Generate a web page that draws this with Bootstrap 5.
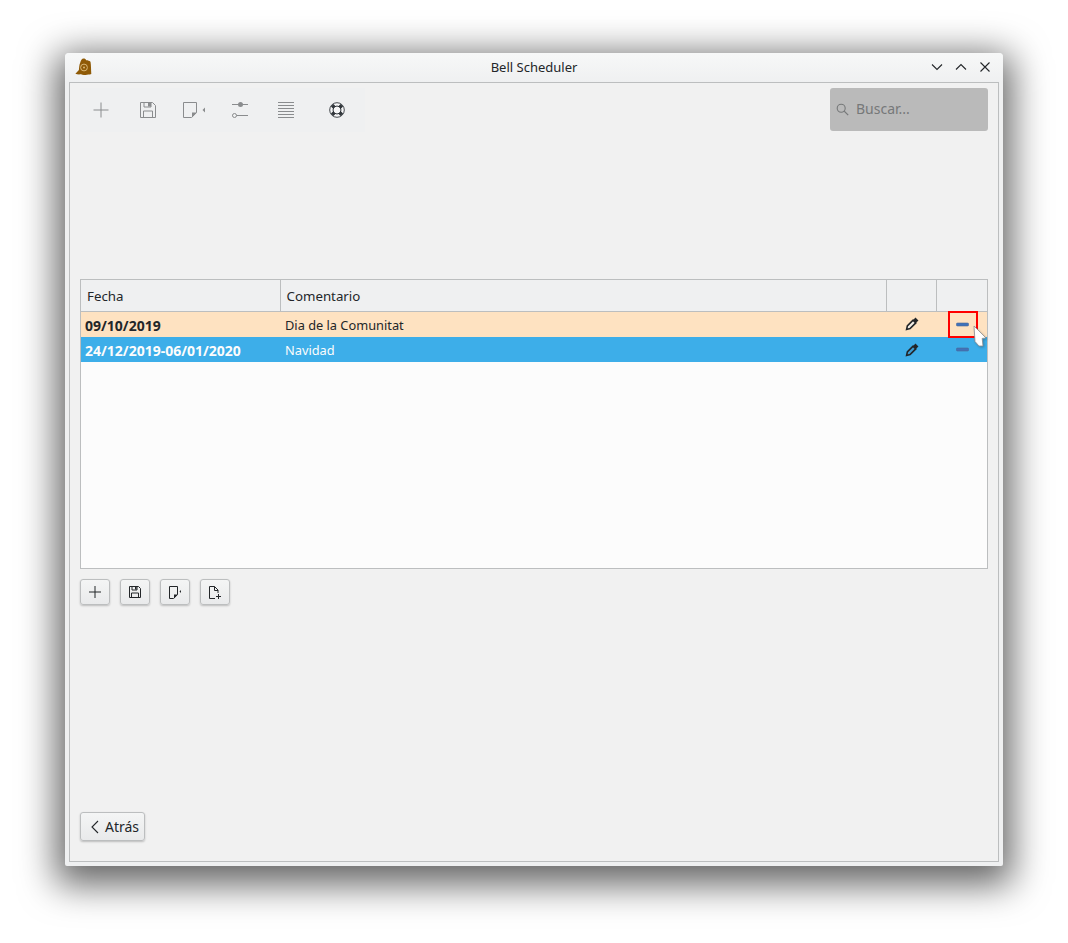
<!DOCTYPE html>
<html lang="es">
<head>
<meta charset="utf-8">
<title>Bell Scheduler</title>
<link href="https://cdn.jsdelivr.net/npm/bootstrap@5.3.0/dist/css/bootstrap.min.css" rel="stylesheet">
<style>
html,body{height:943px;overflow:hidden;background:#fff;font-family:"Noto Sans",sans-serif;font-size:13px;color:#232629}
.app-stage{padding:53px 65px 0;height:943px}
.app-win{position:relative;width:938px;height:813px;background:#eff0f1;border-radius:4px 4px 2px 2px;box-shadow:0 10px 36px 9px rgba(0,0,0,.6);display:flex;flex-direction:column}
.app-title{height:29px;flex:none;padding:0 12px 0 9px;background:linear-gradient(#f7f8f8,#eff0f1);border-radius:4px 4px 0 0;position:relative}
.app-title-text{position:absolute;left:0;right:0;top:5px;text-align:center;line-height:18px;font-size:13px}
.app-winbtns{position:absolute;right:12px;top:8px;gap:12px}
.app-winbtns svg{display:block}
.app-body{flex:1;margin:0 4px 4px;border:1px solid #bcbebf;background:#f1f1f1;padding:5px 10px 20px 10px;display:flex;flex-direction:column}
.app-top{height:44px;flex:none}
.app-toolbar{width:285px;height:44px;background:#eff0f1;position:relative}
.app-tool{position:absolute;top:14px}
.tool-a{left:13px}.tool-b{left:60px}.tool-c{left:103px}.tool-d{left:152px}.tool-e{left:198px}.tool-f{left:249px}
.app-search{width:158px;height:43px;background:#bababa;border-radius:3px;padding-left:6px;gap:7px;color:#767879;font-size:14px}
.app-search span{padding-bottom:2px}
.app-tablewrap{margin-top:147px;height:290px;border:1px solid #bcbebf;background:#fcfcfc;flex:none}
.app-table{table-layout:fixed;width:100%;margin:0;border-collapse:collapse;font-size:12.8px}
.app-table th{height:31px;padding:3px 6px 0;background:#eff0f1;font-weight:400;font-size:13.3px;border-right:1px solid #bcbebf;border-bottom:1px solid #bcbebf;vertical-align:middle;color:#232629}
.app-table th:last-child{border-right:0}
.app-table td{padding:2px 5px 0;vertical-align:middle;border:0;height:25px;background:transparent;color:inherit;box-shadow:none}
.app-table tr.row-warm td{height:26px}
.app-table tr.row-warm{background:#fee2c1;color:#232629}
.app-table tr.row-sel{background:#3daee9;color:#fcfcfc}
.app-table td.date{font-weight:700;font-size:14px;padding-left:4px}
.app-table td.ic{padding:0 0 0 1px;text-align:center}
.app-table svg{display:block;margin:0 auto}
.app-actions{margin-top:10px;gap:10px}
.app-btn{width:30px;height:26px;padding:0;display:flex;align-items:center;justify-content:center;background:linear-gradient(#f4f5f5,#e9eaeb);border:1px solid #bcbebf;border-radius:3px;box-shadow:0 1px 2px rgba(0,0,0,.22)}
.app-back{margin-top:auto;width:65px;height:29px;font-size:14px;color:#232629;gap:6px;justify-content:flex-start;padding-left:9px}
.app-mark{position:absolute;left:883px;top:258px;width:30px;height:27px;border:2px solid #f00}
.app-cursor{position:absolute;left:907px;top:272px;filter:drop-shadow(1px 1px 1px rgba(0,0,0,.25))}
</style>
</head>
<body>
<div class="app-stage">
<div class="app-win">
  <div class="app-title d-flex align-items-center">
    <svg width="19" height="20" viewBox="0 0 19 20"><path d="M9.500.6c1.500 0 2.300.7 2.700 1.700 1.300-.1 3.200.5 4.300 1.400.6 3.500.5 8 .8 12.300-1.800.7-4 .5-5.600.9-2 .4-3.300.2-4.700-.6-1.800.2-4 .2-5.600-.5l3.500-3.700c.3-2.500.2-4.800 1.300-7.300C6.600 2.800 8 .6 9.500.6z" fill="#8f5a06"/><circle cx="10" cy="9.500" r="3.400" fill="none" stroke="#d9b878" stroke-width="1"/><circle cx="10" cy="9.500" r="1" fill="#d9b878"/></svg>
    <div class="app-title-text">Bell Scheduler</div>
    <div class="app-winbtns d-flex">
      <svg width="12" height="12" viewBox="0 0 12 12"><path d="M1 3.500l5 5 5-5" fill="none" stroke="#232629" stroke-width="1.100"/></svg>
      <svg width="12" height="12" viewBox="0 0 12 12"><path d="M1 8.500l5-5 5 5" fill="none" stroke="#232629" stroke-width="1.100"/></svg>
      <svg width="12" height="12" viewBox="0 0 12 12"><path d="M1.500 1.500l9 9m0-9l-9 9" fill="none" stroke="#232629" stroke-width="1.100"/></svg>
    </div>
  </div>
  <div class="app-body">
    <div class="app-top d-flex justify-content-between">
      <div class="app-toolbar">
        <svg class="app-tool tool-a" width="16" height="16" viewBox="0 0 16 16"><path d="M8 .5v15M.5 8h15" stroke="#8a8c8e" stroke-width="1" fill="none"/></svg>
        <svg class="app-tool tool-b" width="16" height="16" viewBox="0 0 16 16"><path d="M.5.500h12l3 3v12H.5zM4 .5v4.500h7V.5M3.500 15.500V9h9v6.500" fill="none" stroke="#8a8c8e"/><rect x="8" y="1" width="3" height="3.500" fill="#8a8c8e"/></svg>
        <svg class="app-tool tool-c" width="23" height="16" viewBox="0 0 23 16"><path d="M.5.500h13v10l-5 5h-8z" fill="none" stroke="#8a8c8e"/><path d="M9 15.500v-5h5z" fill="#8a8c8e"/><path d="M22 5.500v5l-2.500-2.500z" fill="#8a8c8e"/></svg>
        <svg class="app-tool tool-d" width="16" height="16" viewBox="0 0 16 16"><path d="M0 2.500h16M0 13.500h16" stroke="#8a8c8e" fill="none"/><circle cx="8.500" cy="2.500" r="2.500" fill="#8a8c8e"/><circle cx="2.500" cy="13.500" r="2" fill="#eff0f1" stroke="#8a8c8e"/></svg>
        <svg class="app-tool tool-e" width="16" height="16" viewBox="0 0 16 16"><path d="M0 .5h16M0 3.500h16M0 6.500h16M0 9.500h16M0 12.500h16M0 15.500h16" stroke="#8a8c8e" fill="none"/></svg>
        <svg class="app-tool tool-f" width="16" height="16" viewBox="0 0 16 16"><circle cx="8" cy="8" r="7.300" fill="#f6f6f7" stroke="#31363b" stroke-width=".9"/><circle cx="8" cy="8" r="4" fill="#f6f6f7" stroke="#31363b" stroke-width="1"/><path d="M3.200 3.200l2.200 2.200M12.800 3.200l-2.200 2.200M3.200 12.800l2.200-2.200M12.800 12.800l-2.200-2.200" stroke="#31363b" stroke-width="3.600"/></svg>
      </div>
      <div class="app-search d-flex align-items-center">
        <svg width="13" height="13" viewBox="0 0 13 13"><circle cx="5.200" cy="5.200" r="4" fill="none" stroke="#767879" stroke-width="1.100"/><path d="M8.200 8.200l4 4" stroke="#767879" stroke-width="1.200"/></svg>
        <span>Buscar...</span>
      </div>
    </div>
    <div class="app-tablewrap">
      <table class="table app-table">
        <colgroup><col style="width:199px"><col style="width:606px"><col style="width:50px"><col></colgroup>
        <thead><tr><th>Fecha</th><th>Comentario</th><th></th><th></th></tr></thead>
        <tbody>
          <tr class="row-warm">
            <td class="date">09/10/2019</td><td>Dia de la Comunitat</td>
            <td class="ic"><svg width="14" height="14" viewBox="0 0 13 13"><path d="M2.200 8.300L7.500 3l2.500 2.500L4.700 10.800l-3.200.8z" fill="#f4efe8" stroke="#232629" stroke-width="1.500"/><path d="M7.500 3l2.200-2.500 2.800 2.800L10 5.500z" fill="#232629"/></svg></td>
            <td class="ic"><svg width="13" height="5" viewBox="0 0 13 5"><rect x=".3" y="1" width="12.400" height="3" rx="1.300" fill="#3f72bb" stroke="#4f6a94" stroke-width=".6"/></svg></td>
          </tr>
          <tr class="row-sel">
            <td class="date">24/12/2019-06/01/2020</td><td>Navidad</td>
            <td class="ic"><svg width="14" height="14" viewBox="0 0 13 13"><path d="M2.200 8.300L7.500 3l2.500 2.500L4.700 10.800l-3.200.8z" fill="#3d9bd0" stroke="#232629" stroke-width="1.500"/><path d="M7.500 3l2.200-2.500 2.800 2.800L10 5.500z" fill="#232629"/></svg></td>
            <td class="ic"><svg width="13" height="5" viewBox="0 0 13 5"><rect x=".3" y="1" width="12.400" height="3" rx="1.300" fill="#3f72bb" stroke="#4f6a94" stroke-width=".6"/></svg></td>
          </tr>
        </tbody>
      </table>
    </div>
    <div class="app-actions d-flex">
      <button class="btn app-btn" type="button" aria-label="Añadir"><svg width="12" height="12" viewBox="0 0 12 12"><path d="M6 0v12M0 6h12" stroke="#232629" fill="none"/></svg></button>
      <button class="btn app-btn" type="button" aria-label="Guardar"><svg width="12" height="12" viewBox="0 0 12 12"><path d="M.5.500h9l2 2v9H.5zM3 .5v3.500h5V.5M2.500 11.500V7h7v4.500" fill="none" stroke="#232629"/><rect x="6" y="1" width="1.500" height="2.500" fill="#232629"/></svg></button>
      <button class="btn app-btn" type="button" aria-label="Exportar"><svg width="13" height="13" viewBox="0 0 13 13"><path d="M.5.500h8v8l-4 4h-4z" fill="none" stroke="#232629"/><path d="M5 12.500v-4h4z" fill="#232629"/><path d="M12 4v3l-1.500-1.500z" fill="#232629"/></svg></button>
      <button class="btn app-btn" type="button" aria-label="Importar"><svg width="13" height="13" viewBox="0 0 13 13"><path d="M6 12.500H.5V.5h5l3.500 3.500v3M5.500.5v4h3.500" fill="none" stroke="#232629"/><path d="M9.500 8v5M7 10.500h5" stroke="#232629" fill="none"/></svg></button>
    </div>
    <button class="btn app-btn app-back" type="button"><svg width="9" height="14" viewBox="0 0 9 14"><path d="M8 1L2 7l6 6" fill="none" stroke="#232629" stroke-width="1.100"/></svg><span>Atrás</span></button>
  </div>
  <div class="app-mark"></div>
  <svg class="app-cursor" width="16" height="23" viewBox="0 0 16 23"><path d="M2 1l12 12-3.800.4.800 7.600H7L3 16.500z" fill="#fff" stroke="#8a8c8e" stroke-width=".8" stroke-linejoin="round"/></svg>
</div>
</div>
</body>
</html>
